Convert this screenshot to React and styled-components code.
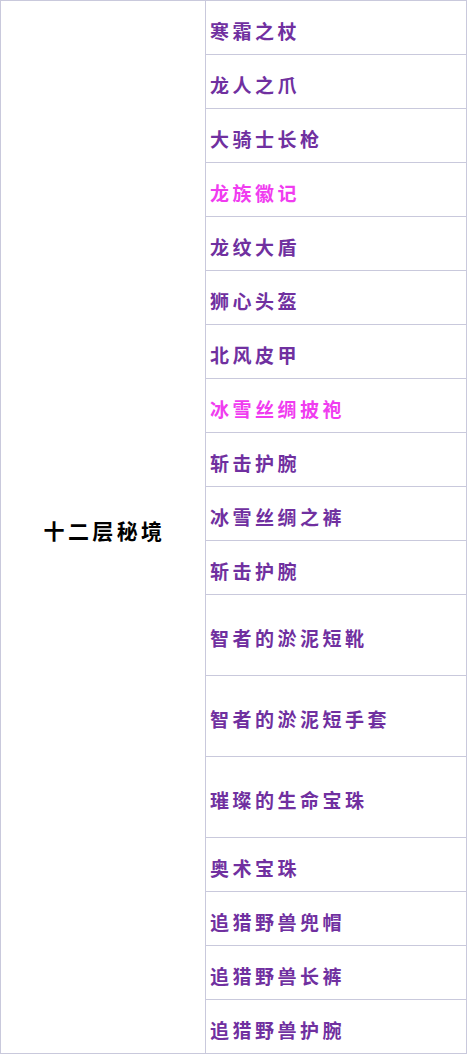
import React from 'react';
import styled, { createGlobalStyle } from 'styled-components';

const GlobalStyle = createGlobalStyle`
  html, body {
    margin: 0;
    padding: 0;
    background: #ffffff;
  }
`;

const Board = styled.div`
  display: grid;
  grid-template-columns: 205px 261px;
  width: 467px;
  border-top: 1px solid #c9c9dc;
  border-left: 1px solid #c9c9dc;
  box-sizing: border-box;
  font-family: "Noto Sans CJK SC", "Noto Sans", sans-serif;
`;

const Region = styled.div`
  grid-column: 1;
  grid-row: 1 / span ${(p) => p.rows};
  display: flex;
  align-items: center;
  justify-content: center;
  padding-top: 6px;
  padding-left: 3px;
  border-right: 1px solid #c9c9dc;
  border-bottom: 1px solid #c9c9dc;
  font-size: 21px;
  font-weight: 700;
  letter-spacing: 3.4px;
  color: #000000;
`;

const Item = styled.div`
  grid-column: 2;
  height: ${(p) => (p.tall ? 81 : 54)}px;
  box-sizing: border-box;
  display: flex;
  align-items: center;
  padding: 5px 0 0 4px;
  border-right: 1px solid #c9c9dc;
  border-bottom: 1px solid #c9c9dc;
  font-size: 19px;
  font-weight: 700;
  letter-spacing: 3.5px;
  color: ${(p) => (p.rare ? '#f03cf0' : '#7030a0')};
`;

const items = [
  { name: '寒霜之杖' },
  { name: '龙人之爪' },
  { name: '大骑士长枪' },
  { name: '龙族徽记', rare: true },
  { name: '龙纹大盾' },
  { name: '狮心头盔' },
  { name: '北风皮甲' },
  { name: '冰雪丝绸披袍', rare: true },
  { name: '斩击护腕' },
  { name: '冰雪丝绸之裤' },
  { name: '斩击护腕' },
  { name: '智者的淤泥短靴', tall: true },
  { name: '智者的淤泥短手套', tall: true },
  { name: '璀璨的生命宝珠', tall: true },
  { name: '奥术宝珠' },
  { name: '追猎野兽兜帽' },
  { name: '追猎野兽长裤' },
  { name: '追猎野兽护腕' },
];

export default function App() {
  return (
    <>
      <GlobalStyle />
      <Board>
        <Region rows={items.length}>十二层秘境</Region>
        {items.map((it, i) => (
          <Item key={i} rare={it.rare} tall={it.tall}>
            {it.name}
          </Item>
        ))}
      </Board>
    </>
  );
}
